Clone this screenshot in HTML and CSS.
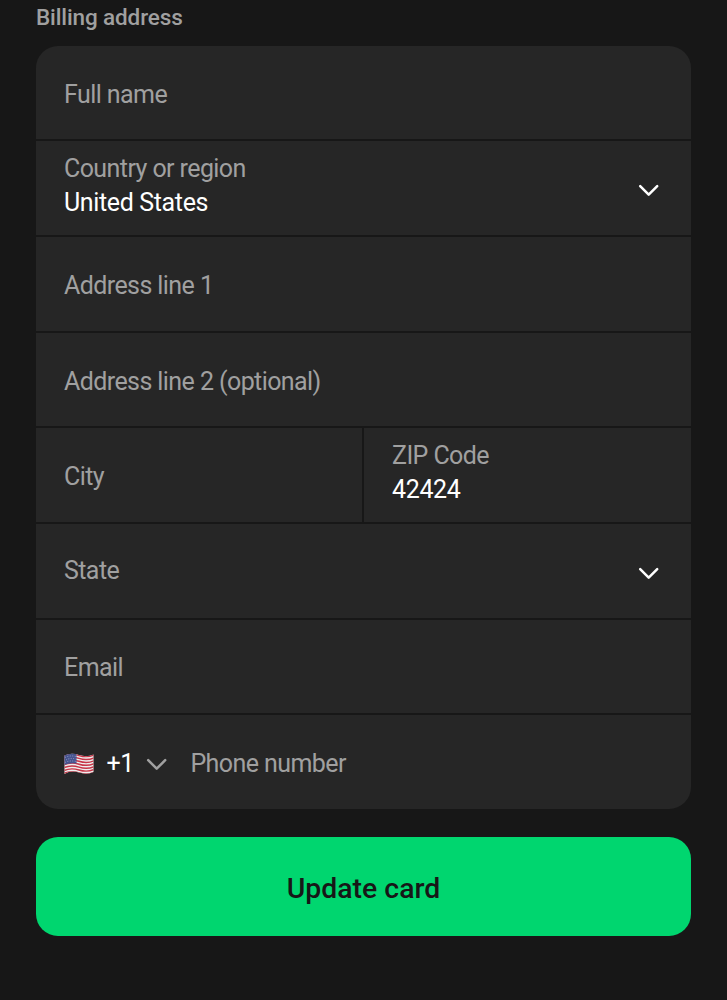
FILE: index.html
```html
<!DOCTYPE html>
<html lang="en">
<head>
<meta charset="utf-8">
<title>Billing address</title>
<link rel="stylesheet" href="styles.css">
</head>
<body>
<main class="page">
  <h1 class="heading">Billing address</h1>
  <div class="form">
    <div class="field"><span class="label">Full name</span></div>
    <div class="field select">
      <div class="stack"><span class="label">Country or region</span><span class="value">United States</span></div>
      <svg class="chevron" viewBox="0 0 22 14"><path d="M2.200 2.200l8.500 8.500 8.500-8.500"/></svg>
    </div>
    <div class="field"><span class="label">Address line 1</span></div>
    <div class="field"><span class="label">Address line 2 (optional)</span></div>
    <div class="split">
      <div class="field"><span class="label">City</span></div>
      <div class="field"><div class="stack"><span class="label">ZIP Code</span><span class="value">42424</span></div></div>
    </div>
    <div class="field select state"><span class="label">State</span>
      <svg class="chevron" viewBox="0 0 22 14"><path d="M2.200 2.200l8.500 8.500 8.500-8.500"/></svg>
    </div>
    <div class="field email"><span class="label">Email</span></div>
    <div class="field phone">
      <svg class="flag" viewBox="0 0 30 22">
        <clipPath id="wave"><path d="M.5 2.500Q7-.5 15 2T29.500 1.500V19Q23 22 15 19.500T.5 21Z"/></clipPath>
        <g clip-path="url(#wave)">
          <path fill="#eee" d="M0 0h30v22H0z"/>
          <path class="stripes" d="M0 3Q7 0 15 2.500T30 2M0 5.900Q7 2.900 15 5.400T30 4.900M0 8.800Q7 5.800 15 8.300T30 7.800M0 11.700Q7 8.700 15 11.200T30 10.700M0 14.600Q7 11.600 15 14.100T30 13.600M0 17.500Q7 14.500 15 17T30 16.500M0 20.400Q7 17.400 15 19.900T30 19.400"/>
          <path fill="#46548f" d="M0 0h12.500v10.500Q6 9.500 0 12Z"/>
          <path class="stars" d="M1 4.500Q6 2 12 3.500M2 7Q6 4.500 12 6M1 9.500Q6 7 12 8.500"/>
        </g>
      </svg>
      <span class="value code">+1</span>
      <svg class="chevron small" viewBox="0 0 22 14"><path d="M2.200 2.200l8.500 8.500 8.500-8.500"/></svg>
      <span class="label">Phone number</span>
    </div>
  </div>
  <button class="submit">Update card</button>
</main>
</body>
</html>
```
FILE: styles.css
```css
* { box-sizing: border-box; }
body { margin: 0; background: #171717; font-family: Roboto, sans-serif; }
.page { height: 1000px; padding: 4px 36px 0; overflow: hidden; }
.heading { margin: 0 0 15.7px; font-size: 22.5px; line-height: 26px; font-weight: 500; letter-spacing: -0.12px; color: #a0a0a0; }
.form { display: grid; grid-template-rows: repeat(8, 1fr); gap: 2px; height: 763.3px; border-radius: 22px; overflow: hidden; }
.field { display: flex; align-items: center; padding: 4.2px 28px 0; background: #262626; font-size: 25px; line-height: 30px; }
.label { letter-spacing: -0.58px; color: #a0a0a0; }
.value { letter-spacing: -0.36px; color: #fff; }
.stack { display: flex; flex-direction: column; gap: 4px; margin-top: -7.6px; }
.select { justify-content: space-between; padding-right: 31px; }
.state .label { margin-top: -3px; }
.email { padding-top: 3px; }
.split { display: grid; grid-template-columns: 326px 1fr; gap: 2px; }
.chevron { width: 22px; height: 14px; margin-top: 2.4px; fill: none; stroke: #fff; stroke-width: 2.5; stroke-linecap: round; stroke-linejoin: round; }
.small { margin: 2px 22.5px 0 12px; stroke: #a0a0a0; }
.flag { width: 30px; height: 22px; margin: -1px 12.4px 0 0; }
.stripes { fill: none; stroke: #c83648; stroke-width: 1.45; }
.stars { fill: none; stroke: #a8aed0; stroke-width: 0.8; stroke-dasharray: 1 1.5; }
.submit { display: block; width: 100%; height: 99px; margin-top: 28px; padding: 5px 0 0; border: 0; border-radius: 22px; background: #00d66f; color: #171717; font: 500 28.4px/34px Roboto, sans-serif; }
```
